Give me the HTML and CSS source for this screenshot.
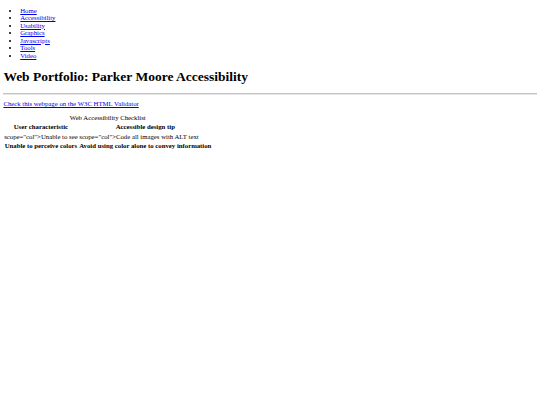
FILE: index.html
```html
<!DOCTYPE html>
<html lang="en">
<head>
<meta charset="utf-8">
<title>Web Portfolio: Parker Moore Accessibility</title>
<link rel="stylesheet" href="styles.css">
</head>
<body class="page">
<ul class="nav">
<li><a href="#">Home</a></li>
<li><a href="#">Accessibility</a></li>
<li><a href="#">Usability</a></li>
<li><a href="#">Graphics</a></li>
<li><a href="#">Javascripts</a></li>
<li><a href="#">Tools</a></li>
<li><a href="#">Video</a></li>
</ul>
<h1 class="title">Web Portfolio: Parker Moore Accessibility</h1>
<hr class="rule">
<p class="validator"><a href="#">Check this webpage on the W3C HTML Validator</a></p>
<table class="checklist">
<caption>Web Accessibility Checklist</caption>
<tr><th>User characteristic</th><th>Accessible design tip</th></tr>
<tr><td>scope=&quot;col&quot;&gt;Unable to see</td><td>scope=&quot;col&quot;&gt;Code all images with ALT text</td></tr>
<tr><th>Unable to perceive colors</th><th>Avoid using color alone to convey information</th></tr>
</table>
</body>
</html>
```

FILE: styles.css
```css
html {
  background: #ffffff;
}
.page {
  margin: 0 3.375px 3.375px;
  font-family: "Liberation Serif", "Times New Roman", serif;
  font-size: 6.75px;
  line-height: 1.15;
  color: #000000;
}
.nav {
  margin: 6.5px 0 7.75px;
  padding-left: 16.875px;
  line-height: 7.6px;
}
.nav a, .validator a {
  color: #0000ee;
}
.title {
  font-size: 13.5px;
  margin: 9.045px 0;
  line-height: 1.15;
}
.rule {
  margin: 3.375px 0;
  height: 0;
  border: 0;
  border-top: 1px solid #c4c4c4;
  border-bottom: 1px solid #e6e6e6;
}
.validator {
  margin: 4.75px 0 6.75px;
}
.checklist {
  border-spacing: 0.85px;
  font-size: 6.75px;
}
.checklist th, .checklist td {
  padding: 0.9px 0.8px;
}
```
